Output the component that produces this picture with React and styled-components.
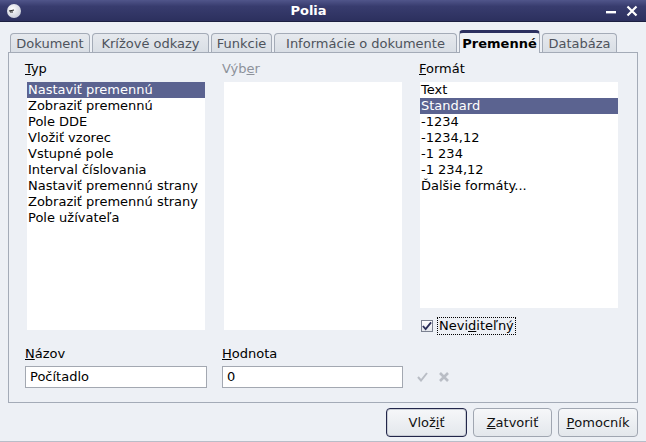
import styled, { createGlobalStyle } from "styled-components";

const Global = createGlobalStyle`
  html, body { margin: 0; padding: 0; background: #edf0f5; }
  body { font-family: "DejaVu Sans", Verdana, sans-serif; font-size: 13px; font-weight: 400; color: #000; }
`;

const Window = styled.div`
  width: 646px;
  height: 442px;
  box-sizing: border-box;
  background: #edf0f5;
  display: flex;
  flex-direction: column;
  border-bottom: 1px solid #b8bdc8;
  overflow: hidden;
`;

const TitleBar = styled.div`
  height: 22px;
  flex: none;
  display: flex;
  align-items: center;
  padding: 0 8px 0 6px;
  background: linear-gradient(#50558a 0%, #383c6e 30%, #2c305e 100%);
  border-bottom: 1px solid #1c1f40;
  box-sizing: border-box;
`;

const Title = styled.div`
  flex: 1;
  text-align: center;
  color: #fff;
  font-weight: bold;
  font-size: 13px;
  padding-right: 10px;
`;

const Controls = styled.div`
  display: flex;
  gap: 9px;
  align-items: center;
`;

const Body = styled.div`
  padding: 7px 8px 0 8px;
  display: flex;
  flex-direction: column;
`;

const TabRow = styled.div`
  height: 23px;
  display: flex;
  align-items: flex-end;
  gap: 2px;
  padding-left: 2px;
`;

const Tab = styled.div`
  width: ${(p) => p.$w}px;
  box-sizing: border-box;
  height: ${(p) => (p.$active ? 23 : 19)}px;
  display: flex;
  align-items: center;
  justify-content: center;
  border: 1px solid #a4abb7;
  border-bottom: none;
  border-radius: 4px 4px 0 0;
  background: ${(p) => (p.$active ? "#edf0f5" : "linear-gradient(#e6e9ee, #d9dee5)")};
  color: ${(p) => (p.$active ? "#000" : "#4e535c")};
  font-weight: ${(p) => (p.$active ? "bold" : "normal")};
  border-top: ${(p) => (p.$active ? "3px solid #2c3060" : "1px solid #a4abb7")};
  padding-top: ${(p) => (p.$active ? 0 : 1)}px;
  position: relative;
  z-index: ${(p) => (p.$active ? 2 : 0)};
  margin-bottom: ${(p) => (p.$active ? -1 : 0)}px;
  white-space: nowrap;
`;

const Panel = styled.div`
  height: 351px;
  box-sizing: border-box;
  border: 1px solid #a4abb7;
  padding: 8px 0 0 16px;
  position: relative;
  z-index: 1;
`;

const Columns = styled.div`
  display: grid;
  grid-template-columns: 181px 181px 200px;
  column-gap: 16px;
`;

const Column = styled.div`
  display: flex;
  flex-direction: column;
`;

const Label = styled.div`
  height: 15px;
  line-height: 15px;
  font-weight: 400;
  color: ${(p) => (p.$disabled ? "#8d929b" : "#000")};
  white-space: nowrap;
`;

const ListBox = styled.div`
  margin-top: 6px;
  margin-left: ${(p) => p.$indent}px;
  width: ${(p) => p.$w}px;
  height: ${(p) => p.$h}px;
  background: #fff;
`;

const Item = styled.div`
  height: 16px;
  line-height: 16px;
  padding-left: 1px;
  white-space: nowrap;
  background: ${(p) => (p.$selected ? "#5b6390" : "transparent")};
  color: ${(p) => (p.$selected ? "#fff" : "#000")};
`;

const CheckRow = styled.label`
  margin-top: 10px;
  display: flex;
  align-items: center;
  gap: 5px;
  padding-left: 2px;
`;

const CheckBox = styled.span`
  width: 12px;
  height: 12px;
  box-sizing: border-box;
  border: 1px solid #7b8190;
  background: linear-gradient(#ffffff, #e4e7ec);
  display: flex;
  align-items: center;
  justify-content: center;
`;

const FocusText = styled.span`
  outline: 1px dotted #000;
  outline-offset: 0;
  padding: 0 1px;
  line-height: 16px;
`;

const Fields = styled.div`
  margin-top: 12px;
  display: grid;
  grid-template-columns: 181px 181px 200px;
  column-gap: 16px;
  align-items: end;
`;

const Field = styled.div`
  display: flex;
  flex-direction: column;
  gap: 5px;
`;

const Input = styled.div`
  height: 22px;
  width: ${(p) => p.$w}px;
  box-sizing: border-box;
  border: 1px solid #a3a8b1;
  background: #fff;
  padding-left: 4px;
  line-height: 20px;
`;

const EditIcons = styled.div`
  display: flex;
  align-items: center;
  gap: 10px;
  height: 22px;
  margin-left: -2px;
  padding-top: 1px;
`;

const Buttons = styled.div`
  margin-top: 5px;
  display: flex;
  justify-content: flex-end;
  gap: 6px;
`;

const Button = styled.div`
  width: ${(p) => p.$w}px;
  height: 29px;
  box-sizing: border-box;
  display: flex;
  align-items: center;
  justify-content: center;
  font-weight: 400;
  color: #111;
  border: 1px solid ${(p) => (p.$default ? "#22264a" : "#a0a6b1")};
  border-radius: 4px;
  background: linear-gradient(#f6f7f9, #e3e7ec);
  box-shadow: ${(p) => (p.$default ? "inset 0 0 0 1px #c8ccd4" : "none")};
`;

const AppIcon = () => (
  <svg width="16" height="16" viewBox="0 0 16 16">
    <defs>
      <radialGradient id="g" cx="0.4" cy="0.35" r="0.7">
        <stop offset="0" stopColor="#ffffff" />
        <stop offset="1" stopColor="#c9ccd8" />
      </radialGradient>
    </defs>
    <circle cx="8" cy="8" r="7" fill="url(#g)" />
    <path d="M3 8 L8 7 M4 9 L7 9" stroke="#222" strokeWidth="1.2" />
  </svg>
);

const Minimize = () => (
  <svg width="12" height="12" viewBox="0 0 12 12">
    <rect x="1" y="6" width="10" height="2.4" fill="#fff" />
  </svg>
);

const Close = () => (
  <svg width="12" height="12" viewBox="0 0 12 12">
    <path d="M1.5 1.5 L10.5 10.5 M10.5 1.5 L1.5 10.5" stroke="#fff" strokeWidth="2.2" />
  </svg>
);

const Tick = ({ color }) => (
  <svg width="11" height="10" viewBox="0 0 11 10">
    <path d="M1 5 L4 8.5 L10 1" fill="none" stroke={color} strokeWidth="2" />
  </svg>
);

const Cross = () => (
  <svg width="12" height="12" viewBox="0 0 12 12">
    <path d="M2 2 L10 10 M10 2 L2 10" stroke="#b9bdc5" strokeWidth="2.6" />
  </svg>
);

const tabs = [
  ["Dokument", 80],
  ["Krížové odkazy", 117],
  ["Funkcie", 61],
  ["Informácie o dokumente", 183],
  ["Premenné", 81, true],
  ["Databáza", 75],
];

const types = [
  "Nastaviť premennú",
  "Zobraziť premennú",
  "Pole DDE",
  "Vložiť vzorec",
  "Vstupné pole",
  "Interval číslovania",
  "Nastaviť premennú strany",
  "Zobraziť premennú strany",
  "Pole užívateľa",
];

const formats = ["Text", "Standard", "-1234", "-1234,12", "-1 234", "-1 234,12", "Ďalšie formáty..."];

export default function App() {
  return (
    <Window>
      <Global />
      <TitleBar>
        <AppIcon />
        <Title>Polia</Title>
        <Controls>
          <Minimize />
          <Close />
        </Controls>
      </TitleBar>
      <Body>
        <TabRow>
          {tabs.map(([name, w, active]) => (
            <Tab key={name} $w={w} $active={active}>
              {name}
            </Tab>
          ))}
        </TabRow>
        <Panel>
          <Columns>
            <Column>
              <Label>
                <u>T</u>yp
              </Label>
              <ListBox $indent={2} $w={178} $h={248}>
                {types.map((t, i) => (
                  <Item key={t} $selected={i === 0}>
                    {t}
                  </Item>
                ))}
              </ListBox>
            </Column>
            <Column>
              <Label $disabled>
                Výb<u>e</u>r
              </Label>
              <ListBox $indent={2} $w={178} $h={248} />
            </Column>
            <Column>
              <Label>
                <u>F</u>ormát
              </Label>
              <ListBox $indent={1} $w={198} $h={226}>
                {formats.map((f, i) => (
                  <Item key={f} $selected={i === 1}>
                    {f}
                  </Item>
                ))}
              </ListBox>
              <CheckRow>
                <CheckBox>
                  <Tick color="#2a2e58" />
                </CheckBox>
                <FocusText>
                  Nevi<u>d</u>iteľný
                </FocusText>
              </CheckRow>
            </Column>
          </Columns>
          <Fields>
            <Field>
              <Label>
                <u>N</u>ázov
              </Label>
              <Input $w={182}>Počítadlo</Input>
            </Field>
            <Field>
              <Label>
                <u>H</u>odnota
              </Label>
              <Input $w={181}>0</Input>
            </Field>
            <EditIcons>
              <Tick color="#b9bdc5" />
              <Cross />
            </EditIcons>
          </Fields>
        </Panel>
        <Buttons>
          <Button $w={81} $default>
            Vlož<u>i</u>ť
          </Button>
          <Button $w={79}>
            <u>Z</u>atvoriť
          </Button>
          <Button $w={80}>
            <u>P</u>omocník
          </Button>
        </Buttons>
      </Body>
    </Window>
  );
}
